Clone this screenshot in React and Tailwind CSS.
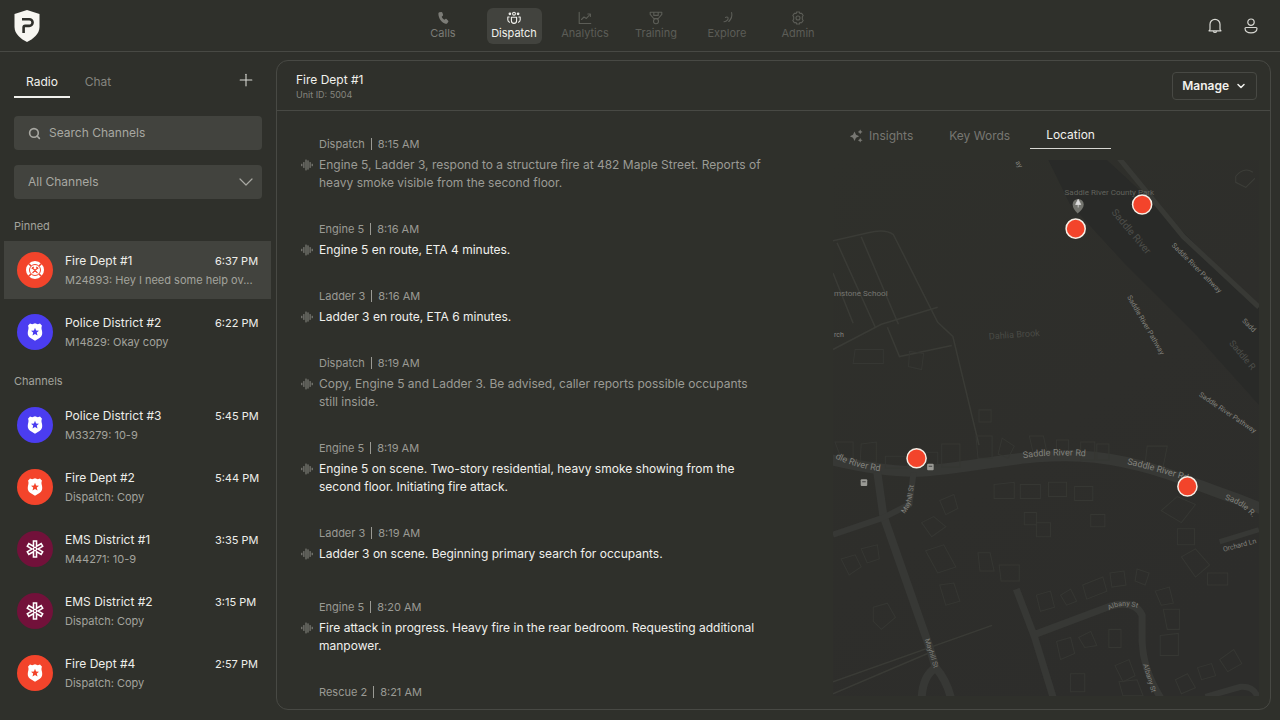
import { useState } from 'react';
import { Plus, ChevronDown, Search } from 'lucide-react';

const navItems = ['Calls', 'Dispatch', 'Analytics', 'Training', 'Explore', 'Admin'];

const pinned = [
  { name: 'Fire Dept #1', preview: 'M24893: Hey I need some help ov...', time: '6:37 PM', type: 'fire' },
  { name: 'Police District #2', preview: 'M14829: Okay copy', time: '6:22 PM', type: 'police' },
];

const channels = [
  { name: 'Police District #3', preview: 'M33279: 10-9', time: '5:45 PM', type: 'police' },
  { name: 'Fire Dept #2', preview: 'Dispatch: Copy', time: '5:44 PM', type: 'fireBadge' },
  { name: 'EMS District #1', preview: 'M44271: 10-9', time: '3:35 PM', type: 'ems' },
  { name: 'EMS District #2', preview: 'Dispatch: Copy', time: '3:15 PM', type: 'ems' },
  { name: 'Fire Dept #4', preview: 'Dispatch: Copy', time: '2:57 PM', type: 'fireBadge' },
];

// transmissions, grouped by burst of radio traffic
const transcript = [
  [
    { from: 'Dispatch', time: '8:15 AM', text: 'Engine 5, Ladder 3, respond to a structure fire at 482 Maple Street. Reports of heavy smoke visible from the second floor.' },
    { from: 'Engine 5', time: '8:16 AM', text: 'Engine 5 en route, ETA 4 minutes.' },
    { from: 'Ladder 3', time: '8:16 AM', text: 'Ladder 3 en route, ETA 6 minutes.' },
    { from: 'Dispatch', time: '8:19 AM', text: 'Copy, Engine 5 and Ladder 3. Be advised, caller reports possible occupants still inside.' },
    { from: 'Engine 5', time: '8:19 AM', text: 'Engine 5 on scene. Two-story residential, heavy smoke showing from the second floor. Initiating fire attack.' },
    { from: 'Ladder 3', time: '8:19 AM', text: 'Ladder 3 on scene. Beginning primary search for occupants.' },
  ],
  [
    { from: 'Engine 5', time: '8:20 AM', text: 'Fire attack in progress. Heavy fire in the rear bedroom. Requesting additional manpower.' },
    { from: 'Rescue 2', time: '8:21 AM', text: '' },
  ],
];

function Logo() {
  return (
    <svg viewBox="0 0 26 32" className="w-[26px] h-8" aria-label="Home">
      <path d="M13 0 L25.5 4 V17 C25.5 24 19 29 13 32 C7 29 .5 24 .5 17 V4 Z" fill="#f7f6f1" />
      <path d="M8 9.3H15.300A3.300 3.300 0 0 1 15.300 15.900H11.200Q9.600 15.900 9.600 17.500V23" fill="none" stroke="#2f302b" strokeWidth="2.600" />
    </svg>
  );
}

function NavIcon({ name }) {
  const stroke = {
    fill: 'none',
    stroke: 'currentColor',
    strokeWidth: 1.1,
    strokeLinecap: 'round',
    strokeLinejoin: 'round',
  };
  return (
    <svg viewBox="0 0 14 14" className="w-3.5 h-3.5" aria-hidden="true">
      {name === 'Calls' && (
        <path d="M3.4 1.2 5.4.9c.5 0 .8.2.9.6l.8 2.3c.1.4 0 .7-.3.9L5.7 5.8c.6 1.3 1.3 2.1 2.5 2.9l1.3-.8c.4-.2.7-.2 1 .1l1.7 1.7c.3.3.3.7.1 1l-1 1.5c-.4.5-1 .7-1.7.5C5.8 11.600 2.600 7.600 2.400 2.900c0-.9.3-1.500 1-1.700Z" fill="currentColor" />
      )}
      {name === 'Dispatch' && (
        <g {...stroke}>
          <circle cx="7" cy="2.700" r="1.400" />
          <circle cx="2.900" cy="2.800" r=".8" fill="currentColor" />
          <circle cx="11.100" cy="2.800" r=".8" fill="currentColor" />
          <path d="M4.400 6.200h5.200v3.600a2.600 2.600 0 0 1-5.200 0Z" />
          <path d="M2.200 6H.8v2.700c0 1.200.6 2 1.700 2.500M11.800 6h1.400v2.700c0 1.200-.6 2-1.700 2.500" />
        </g>
      )}
      {name === 'Analytics' && (
        <g {...stroke}>
          <path d="M1.200 1.200v11.300h11.600M3.500 8.500 6 6l2.400 1.400L12 3.500" />
          <path d="M9.800 3H12.400V5.500" />
        </g>
      )}
      {name === 'Training' && (
        <g {...stroke}>
          <path d="M1.200 1.200h11.600v2.200L9.300 7.500H4.700L1.200 3.400ZM4.800 1.200v3.200h4.400V1.200" />
          <circle cx="7" cy="10.200" r="2.500" />
        </g>
      )}
      {name === 'Explore' && (
        <g {...stroke}>
          <path d="M11.600 1.500c.7 3-.2 6.400-2.800 9" />
          <path d="M5.500 6.500c1-.8 2.300-.6 2.600.4.300 1.300-1 3.600-4.100 3.900" />
        </g>
      )}
      {name === 'Admin' && (
        <g {...stroke}>
          <path d="M5.600 1h2.800l.5 1.500 1.600-.3 1.700 2.300-.9 1.300v2.400l.9 1.300-1.700 2.300-1.600-.3L8.400 13H5.600l-.5-1.500-1.600.3-1.700-2.300.9-1.300V5.800l-.9-1.300 1.700-2.300 1.600.3Z" />
          <circle cx="7" cy="7" r="2" />
        </g>
      )}
    </svg>
  );
}

function BellIcon() {
  return (
    <svg viewBox="0 0 16 16" className="w-4 h-4" fill="none" stroke="currentColor" strokeWidth="1.2" strokeLinejoin="round" aria-hidden="true">
      <path d="M3 11.500V6.300a5 5 0 0 1 10 0v5.200l1 1.300H2Z" />
      <path d="M6.300 13.200a1.800 1.800 0 0 0 3.400 0" />
    </svg>
  );
}

function UserIcon() {
  return (
    <svg viewBox="0 0 16 16" className="w-4 h-4" fill="none" stroke="currentColor" strokeWidth="1.200" strokeLinejoin="round" aria-hidden="true">
      <circle cx="8" cy="4.200" r="3.200" />
      <path d="M3 9.500h10q1 0 1 1c0 2.800-2.600 4.300-6 4.300s-6-1.500-6-4.300q0-1 1-1Z" />
    </svg>
  );
}

function WaveIcon() {
  return (
    <svg viewBox="0 0 12 12" className="w-3 h-3 mt-[3px] shrink-0 text-[#8b8b85]" stroke="currentColor" strokeWidth="1" strokeLinecap="round" aria-hidden="true">
      <path d="M.8 5.200v1.600M2.900 3.500v5M5 1v10M7 1.800v8.400M9.100 3.500v5M11.200 5.200v1.600" />
    </svg>
  );
}

function ChannelIcon({ type }) {
  if (type === 'ems') {
    return (
      <span className="w-9 h-9 rounded-full bg-[#72113a] flex items-center justify-center shrink-0">
        <svg viewBox="0 0 18 18" className="w-[18px] h-[18px]" fill="none" aria-hidden="true">
          <path d="M9 .2v17.600M1.400 4.600l15.200 8.800M1.400 13.400l15.200-8.800" stroke="#fff" strokeWidth="4.600" />
          <path d="M9 1.700v5M9 11.300v5M2.700 5.400l4.400 2.500M10.900 10.100l4.400 2.500M2.700 12.600l4.400-2.500M10.900 7.900l4.400-2.500" stroke="#72113a" strokeWidth="1.500" />
          <circle cx="9" cy="9" r="1" fill="#72113a" />
        </svg>
      </span>
    );
  }
  if (type === 'fire') {
    return (
      <span className="w-9 h-9 rounded-full bg-[#f3442b] flex items-center justify-center shrink-0">
        <svg viewBox="0 0 20 20" className="w-5 h-5" fill="none" stroke="#f3442b" aria-hidden="true">
          <circle cx="10" cy="10" r="9" fill="#fff" stroke="none" />
          <circle cx="10" cy="10" r="5.500" strokeWidth="1" />
          <path d="m3 3 3 3M17 3l-3 3M3 17l3-3M17 17l-3-3" strokeWidth="1.600" />
          <path d="m7 7.500 5.500 5.500M13 7.500 7.500 13M6.800 8.800l2-2M11.200 6.800l2 2" strokeWidth="1.100" />
        </svg>
      </span>
    );
  }
  const police = type === 'police';
  return (
    <span className={`w-9 h-9 rounded-full flex items-center justify-center shrink-0 ${police ? 'bg-[#4b3df0] text-[#4b3df0]' : 'bg-[#f3442b] text-[#f3442b]'}`}>
      <svg viewBox="0 0 16 18" className="w-4 h-[18px]" aria-hidden="true">
        <path d="M3 .5 5.200 1.300 8 .3l2.800 1L13 .5l2 2.300c-.7 1.400-.6 2.800-.2 4.200.9 3.500.5 6.300-2.300 7.900L8 17.700l-4.500-2.800C.7 13.300.3 10.500 1.200 7c.4-1.400.5-2.800-.2-4.200Z" fill="#fff" />
        <path d="m8 4.800 1.100 2.700 2.900.2-2.200 1.900.7 2.800L8 10.900l-2.500 1.500.7-2.800L4 7.700l2.900-.2Z" fill="currentColor" />
      </svg>
    </span>
  );
}

function ChannelRow({ channel, active }) {
  return (
    <li>
      <button type="button" className={`w-full h-[58px] pl-[13px] pr-3.5 flex items-center gap-3 text-left ${active ? 'bg-[#42433e]' : ''}`}>
        <ChannelIcon type={channel.type} />
        <span className="flex-1 min-w-0">
          <span className="flex justify-between leading-5 text-[#eeeeea]">
            <span>{channel.name}</span>
            <span className="w-[42px] text-[11px] whitespace-nowrap">{channel.time}</span>
          </span>
          <span className="block text-[11px] leading-[18px] text-[#a3a39d]">{channel.preview}</span>
        </span>
      </button>
    </li>
  );
}

function Transmission({ message }) {
  const dispatch = message.from === 'Dispatch';
  return (
    <li className="flex flex-col gap-1">
      <div className="pl-[18px] flex items-center gap-1.5 text-[11px] leading-4 text-[#9a9a94]">
        <span>{message.from}</span>
        <span className="w-px h-3 bg-[#9a9a94]" />
        <span>{message.time}</span>
      </div>
      {message.text && (
        <div className="flex items-start gap-1.5">
          <WaveIcon />
          <p className={dispatch ? 'text-[#9b9b95]' : 'text-[#f1f1ed]'}>{message.text}</p>
        </div>
      )}
    </li>
  );
}

const buildings = [
  'M22 190h28v14h-30z', 'M76 192l14 2-2 16-13-3z', 'M145 250h12v12h-12z', 'M52 296h22v12H52zM84 292h20v14H84z',
  'M108 284h18v23h-18z', 'M28 284l15-2v20H27z', 'M2 282h18v16H8z', 'M142 276h16v22h-14z', 'M168 278l12 8-6 12-10-4z',
  'M195 276h14l3 14-12 8z', 'M222 280h12v14h-12z', 'M246 282h14v18h-14zM262 284h12v16h-12z', 'M312 286h20l-4 20-18-2z',
  'M160 324l20-2v16h-20z', 'M186 324h20v14h-20z', 'M214 322h18v14h-18zM240 326h18v14h-18z', 'M106 340l14-6 4 14-12 6z',
  'M88 362l12-6 12 10-14 10z', 'M92 390l18-6 12 22-18 6z', 'M144 392h12l4 18h-14z', 'M165 404h20v16h-18z',
  'M190 352h12v12h-12zM202 362h14v14h-14z', 'M256 354h14v12h-14z', 'M106 424l14-2 6 18-14 4z', 'M8 398l14-4 6 12-12 8z',
  'M28 388l16-4 2 14-12 4z', 'M40 446l14-4 8 14-14 12-8-8z', 'M326 350l16-14 18 8-14 18z', 'M342 368h17v16h-17z',
  'M346 396l14-8 14 16-14 12z', 'M372 412h20v12h-20z', 'M202 434l14-4 4 16-14 4z', 'M226 434l10-6 6 12-10 4z',
  'M248 424l20-8 4 14-20 8z', 'M275 412l14-2 2 14-14 2z', 'M302 408l12 4-4 12-10-4z', 'M320 430l14-4 4 16-12 2z',
  'M328 448h16v20h-12z', 'M274 468h12v18h-12z', 'M222 480l14-4 4 16-14 6z', 'M244 476l12-6 6 14-12 2z', 'M325 474l18-2v22h-18z',
  'M280 504l14-6 6 16-12 6z', 'M236 512h14v18h-14z', 'M284 520l18-2 6 16h-20z', 'M340 518l12-6 8 14-14 6z',
  'M362 506l14-4 4 12-14 4z', 'M384 498l14-10 8 14-14 8z',
];

const pins = [
  { x: 307, y: 46 },
  { x: 241, y: 70 },
  { x: 83, y: 298 },
  { x: 352, y: 326 },
];

function LocationMap() {
  return (
    <svg viewBox="0 0 423 536" preserveAspectRatio="xMidYMid slice" className="block w-full flex-1 min-h-0" role="img" aria-label="Unit locations">
      <defs>
        <linearGradient id="land" x1="0" y1="0" x2=".6" y2="1">
          <stop offset="0" stopColor="#2f302b" />
          <stop offset=".6" stopColor="#2e2e2b" />
          <stop offset="1" stopColor="#2d2d2b" />
        </linearGradient>
        <path id="road-west" d="M2 298 Q24 309 56 312" />
        <path id="road-mid" d="M189 298 Q220 293 262 297" />
        <path id="road-east" d="M292 304 Q320 310 360 323" />
        <path id="road-end" d="M389 339 Q408 344 420 361" />
        <path id="mayhill-north" d="M71 353 Q80 345 81 312" />
        <path id="albany-top" d="M274 449 Q292 439 314 452" />
      </defs>
      <rect width="423" height="536" fill="url(#land)" />

      {/* river */}
      <path d="M213 0h57l50 46L423 148V245L360 175 290 105 235 45Z" fill="#292a28" />
      <path d="M284 0Q325 50 348 78L423 148" fill="none" stroke="#383935" strokeWidth="5" />

      {/* footpaths */}
      <g fill="none" stroke="#3a3b36" strokeWidth="1.5">
        <path d="M0 82 35 74Q52 70 60 76L104 163 119 177 145 285" />
        <path d="M4 84 42 168M28 78 65 165M0 114 20 164" />
        <path d="M0 190 48 165 104 148M54 168l12 29 52-11" />
        <path d="M0 520 158 464M0 532 94 492" />
      </g>

      {/* streets */}
      <g fill="none" stroke="#373835" strokeWidth="8" strokeLinejoin="round">
        <path d="M-4 299Q50 312 85 311C140 308 200 290 260 297C320 304 360 325 400 338L430 350" strokeWidth="11" />
        <path d="M44 312 50 355 96 486 102 506Q88 515 88 540M102 506Q114 520 118 540" />
        <path d="M0 374 50 357 76 344 80 312" strokeWidth="6" />
        <path d="M182 428 200 475 220 540M198 474 275 445Q300 438 307 454V480Q308 510 328 540" strokeWidth="7" />
        <path d="M384 381 423 369" strokeWidth="5" />
        <path d="M370 535 405 525Q418 524 422 536" strokeWidth="6" />
      </g>

      <g fill="none" stroke="#363733" strokeWidth="1">
        {buildings.map((d) => <path key={d} d={d} />)}
        <path d="M400 18q8-10 17-4M400 18v6l10 5 9-9" stroke="#3d3e39" />
      </g>

      {/* labels */}
      <g fontFamily="Roboto, sans-serif" fontSize="7" fill="#82827d">
        <text x="230" y="37" fill="#62635d" fontSize="8">Saddle River County Park</text>
        <text x="1" y="137" fill="#777772" fontSize="8">mstone School</text>
        <text x="1" y="178">rch</text>
        <text transform="translate(155 180) rotate(-4)" fill="#4a4b46" fontSize="9">Dahlia Brook</text>
        <text transform="translate(181 4) rotate(60)">ay</text>
        <text transform="translate(336 87) rotate(45)">Saddle River Pathway</text>
        <text transform="translate(292 138) rotate(60)">Saddle River Pathway</text>
        <text transform="translate(363 236) rotate(34)">Saddle River Pathway</text>
        <text transform="translate(406 162) rotate(45)">Sadd</text>
        <text transform="translate(276 54) rotate(50)" fill="#4d4e4a" fontSize="10">Saddle River</text>
        <text transform="translate(393 184) rotate(50)" fill="#4d4e4a" fontSize="9">Saddle R</text>
        <text transform="translate(388 391) rotate(-15)">Orchard Ln</text>
        <text transform="translate(91 478) rotate(72)">Mayhill St</text>
        <text transform="translate(308 503) rotate(73)">Albany St</text>
        <text><textPath href="#mayhill-north">Mayhill St</textPath></text>
        <text><textPath href="#albany-top">Albany St</textPath></text>
        <g fontSize="9">
          <text><textPath href="#road-west">dle River Rd</textPath></text>
          <text><textPath href="#road-mid">Saddle River Rd</textPath></text>
          <text><textPath href="#road-east">Saddle River Rd</textPath></text>
          <text fontSize="8"><textPath href="#road-end">Saddle R.</textPath></text>
        </g>
      </g>

      {/* park marker and bus stops */}
      <path d="M243 55q-5-5-5-9a5.500 5.500 0 0 1 11 0q0 4-6 9Z" fill="#73746e" />
      <path d="m243.500 41-2.500 5h5ZM243.500 45v4" fill="#ddd" stroke="#ddd" strokeWidth=".8" />
      <g fill="#9a9a95">
        <rect x="93.500" y="303.500" width="6.500" height="6.500" rx="1" />
        <rect x="27.500" y="319" width="6.500" height="6.500" rx="1" />
        <path d="M95 306h3.500M29 321.500h3.500" stroke="#444" />
      </g>

      {pins.map((pin) => (
        <circle key={pin.x} cx={pin.x} cy={pin.y} r="9.500" fill="#f3442b" stroke="#f6efe6" strokeWidth="1.500" />
      ))}
    </svg>
  );
}

function App() {
  const [activeNav, setActiveNav] = useState('Dispatch');
  const [query, setQuery] = useState('');

  return (
    <div className="h-screen flex flex-col overflow-hidden bg-[#2f302b] text-xs leading-[18px] text-[#f1f1ed] font-['Inter',sans-serif]">
      {/* TOP BAR */}
      <header className="h-[52px] shrink-0 pl-3.5 pr-[15px] flex items-center justify-between border-b border-[#484944]">
        <a href="#home"><Logo /></a>
        <nav className="flex gap-4">
          {navItems.map((item) => (
            <button
              key={item}
              type="button"
              onClick={() => setActiveNav(item)}
              className={`w-[55px] h-9 rounded-md flex flex-col items-center justify-center text-[11px] leading-4 ${
                item === activeNav ? 'bg-[#42433e] text-[#f1f1ed]' : item === 'Calls' ? 'text-[#7c7c77]' : 'text-[#5c5d57]'
              }`}
            >
              <NavIcon name={item} />
              {item}
            </button>
          ))}
        </nav>
        <div className="flex gap-2 text-[#d8d8d3]">
          <button type="button" aria-label="Notifications" className="w-7 h-7 flex items-center justify-center"><BellIcon /></button>
          <button type="button" aria-label="Account" className="w-7 h-7 flex items-center justify-center"><UserIcon /></button>
        </div>
      </header>

      <div className="flex-1 min-h-0 flex">
        {/* SIDEBAR */}
        <aside className="w-[276px] shrink-0 pt-4">
          <div className="px-3.5 flex justify-between items-start">
            <div className="flex">
              <button type="button" className="w-14 h-[30px] pt-[5px] flex justify-center border-b-2 border-[#f1f1ed]">Radio</button>
              <button type="button" className="w-14 h-[30px] pt-[5px] flex justify-center text-[#85857f]">Chat</button>
            </div>
            <button type="button" aria-label="Add channel" className="pt-0.5 pr-1.5">
              <Plus className="w-5 h-5 text-[#d8d8d3]" strokeWidth={1.3} />
            </button>
          </div>

          <div className="mt-[18px] px-3.5 flex flex-col gap-[15px] text-[#a8a8a2]">
            <label className="h-[34px] px-3.5 rounded flex items-center gap-2 bg-[#42433e]">
              <Search className="w-[13px] h-[13px]" strokeWidth={3} />
              <input
                type="text"
                aria-label="Search channels"
                placeholder="Search Channels"
                value={query}
                onChange={(e) => setQuery(e.target.value)}
                className="flex-1 min-w-0 bg-transparent outline-none placeholder:text-[#a8a8a2]"
              />
            </label>
            <div className="grid items-center rounded bg-[#42433e]">
              <select aria-label="Filter channels" className="col-start-1 row-start-1 h-[34px] px-3.5 appearance-none bg-transparent outline-none">
                <option>All Channels</option>
              </select>
              <ChevronDown className="col-start-1 row-start-1 justify-self-end mr-1 w-6 h-6 pointer-events-none" strokeWidth={1.2} />
            </div>
          </div>

          <h2 className="mt-[18px] px-3.5 text-[11px] leading-[18px] text-[#a3a39d]">Pinned</h2>
          <ul className="mt-1.5 pl-1 pr-[5px] flex flex-col gap-1">
            {pinned.map((channel, i) => <ChannelRow key={channel.name} channel={channel} active={i === 0} />)}
          </ul>
          <h2 className="mt-[11px] px-3.5 text-[11px] leading-[18px] text-[#a3a39d]">Channels</h2>
          <ul className="mt-1.5 pl-1 pr-[5px] flex flex-col gap-1">
            {channels.map((channel) => <ChannelRow key={channel.name} channel={channel} />)}
          </ul>
        </aside>

        {/* MAIN PANEL */}
        <main className="flex-1 min-w-0 mt-2 mr-[9px] mb-2.5 flex flex-col border border-[#484944] rounded-xl overflow-hidden">
          <div className="h-[50px] shrink-0 pl-[19px] pr-[13px] flex items-center justify-between border-b border-[#484944]">
            <div>
              <h1>Fire Dept #1</h1>
              <p className="text-[9px] leading-3 text-[#85857f]">Unit ID: 5004</p>
            </div>
            <button type="button" className="h-7 px-[9px] flex items-center gap-1.5 rounded-sm border border-[#484944] font-semibold">
              Manage
              <ChevronDown className="w-3 h-3" strokeWidth={3} />
            </button>
          </div>

          <div className="flex-1 min-h-0 flex">
            <section className="flex-1 min-w-0 overflow-hidden pt-[25px] pl-6 pr-[66px] flex flex-col gap-9">
              {transcript.map((group, i) => (
                <ul key={i} className="flex flex-col gap-[29px]">
                  {group.map((message) => <Transmission key={message.from + message.time} message={message} />)}
                </ul>
              ))}
            </section>

            <section className="w-[44%] shrink-0 pr-[11px] pb-[13px] flex flex-col">
              <div className="mt-[11px] mb-[11px] flex gap-1 text-[#777772]">
                <button type="button" className="h-[27px] px-4 flex items-center gap-1.5">
                  <svg viewBox="0 0 14 14" className="w-3.5 h-3.5" fill="currentColor" aria-hidden="true">
                    <path d="M5.500 2.500 7 5.700 10.200 7.200 7 8.700 5.500 11.900 4 8.700.8 7.200 4 5.700ZM11.200.5l.8 1.600 1.600.8-1.600.8-.8 1.600-.8-1.600-1.600-.8 1.600-.8ZM11.200 8.800l.8 1.600 1.600.8-1.600.8-.8 1.600-.8-1.600-1.600-.8 1.600-.8Z" />
                  </svg>
                  Insights
                </button>
                <button type="button" className="h-[27px] px-4">Key Words</button>
                <button type="button" className="h-[27px] px-4 border-b border-[#d8d8d3] text-[#f1f1ed]">Location</button>
              </div>
              <LocationMap />
            </section>
          </div>
        </main>
      </div>
    </div>
  );
}

export default App;
